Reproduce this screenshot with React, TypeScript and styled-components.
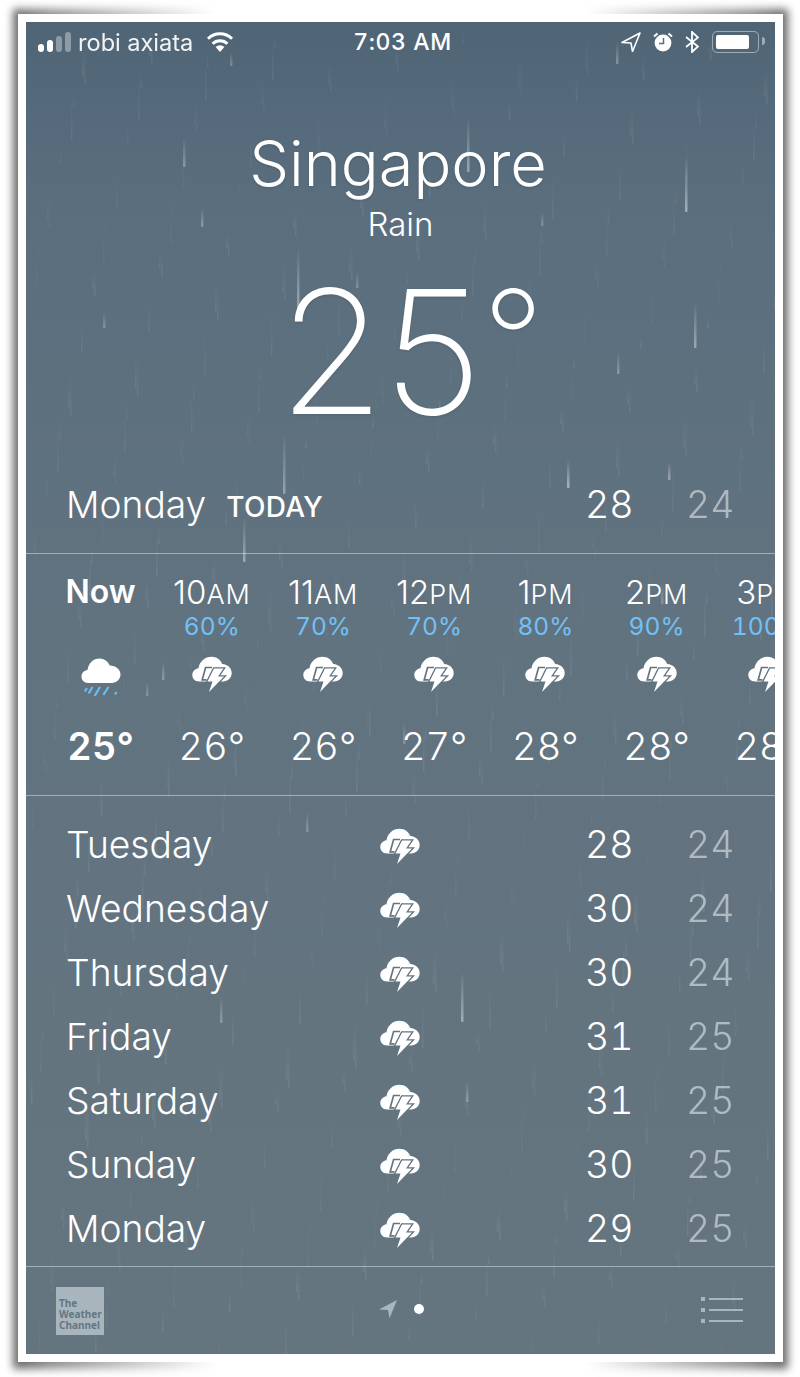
import { createGlobalStyle } from "styled-components";
import styled from "styled-components";

const GlobalStyle = createGlobalStyle`
  html, body {
    margin: 0;
    padding: 0;
    background: #fff;
  }
  body {
    font-family: Inter, "Noto Sans", sans-serif;
    font-variant-numeric: tabular-nums;
    -webkit-font-smoothing: antialiased;
  }
`;

const Page = styled.div`
  width: 800px;
  height: 1377px;
  overflow: hidden;
  padding: 14px 0 0 18px;
  box-sizing: border-box;
  isolation: isolate;
`;

const Frame = styled.div`
  position: relative;
  width: 765px;
  height: 1348px;
  padding: 8px;
  box-sizing: border-box;
  background: #fff;
  &::before {
    content: "";
    position: absolute;
    inset: -5px -5px -7px -5px;
    z-index: -1;
    filter: blur(4px);
    background: linear-gradient(
      90deg,
      #666 0,
      #8f8f8f 5%,
      rgba(255, 255, 255, 0) 26%,
      rgba(255, 255, 255, 0) 74%,
      #8f8f8f 95%,
      #666 100%
    );
  }
`;

const Screen = styled.div`
  position: relative;
  width: 749px;
  height: 1332px;
  overflow: hidden;
  color: #fff;
  background: linear-gradient(180deg, #4f6576 0, #5a6e7e 180px, #61737f 600px, #65757f 100%);
  display: flex;
  flex-direction: column;
`;

const Rain = styled.svg`
  position: absolute;
  inset: 0;
  pointer-events: none;
`;

const StatusBar = styled.div`
  height: 40px;
  display: grid;
  grid-template-columns: 1fr auto 1fr;
  align-items: center;
  padding: 0 11px 0 12px;
  position: relative;
`;

const StatusLeft = styled.div`
  display: flex;
  align-items: center;
`;

const Signal = styled.div`
  display: flex;
  align-items: flex-end;
  gap: 3px;
  height: 20px;
  margin-right: 7px;
`;

const SignalBar = styled.span<{ $h: number; $on?: boolean }>`
  width: 6px;
  height: ${({ $h }) => $h}px;
  border-radius: 3px;
  background: ${({ $on }) => ($on ? "#fff" : "rgba(255,255,255,0.35)")};
`;

const Carrier = styled.span`
  font-weight: 400;
  font-size: 23.6px;
  opacity: 0.92;
  margin-right: 13px;
`;

const Clock = styled.span`
  font-weight: 500;
  font-size: 23px;
  letter-spacing: 0.6px;
  margin-left: 3px;
`;

const StatusRight = styled.div`
  display: flex;
  align-items: center;
  justify-content: flex-end;
  gap: 12px;
`;

const Battery = styled.div`
  position: relative;
  width: 47px;
  height: 22px;
  box-sizing: border-box;
  margin-left: 1px;
  margin-right: 5px;
  padding: 3px;
  border: 1.5px solid rgba(255, 255, 255, 0.45);
  border-radius: 5px;
  &::after {
    content: "";
    position: absolute;
    right: -7px;
    top: 5px;
    width: 3px;
    height: 8px;
    border-radius: 0 3px 3px 0;
    background: rgba(255, 255, 255, 0.45);
  }
`;

const BatteryFill = styled.div`
  width: 33px;
  height: 100%;
  border-radius: 2px;
  background: #fff;
`;

const Hero = styled.div`
  height: 393px;
  display: flex;
  flex-direction: column;
  align-items: center;
  position: relative;
  box-sizing: border-box;
`;

const City = styled.div`
  margin-top: 57px;
  padding-right: 5px;
  font-size: 63px;
  line-height: 88px;
  font-weight: 350;
  text-shadow: 0 1px 3px rgba(0, 0, 0, 0.12);
`;

const Condition = styled.div`
  font-size: 33px;
  line-height: 38px;
  margin-top: -2px;
  font-weight: 300;
`;

const BigTemp = styled.div`
  font-size: 172px;
  line-height: 190px;
  margin-top: 13px;
  padding-left: 10px;
  font-weight: 200;
  letter-spacing: -9px;
  text-shadow: 0 1px 3px rgba(0, 0, 0, 0.12);
`;

const BigDegree = styled.span`
  font-size: 135px;
  line-height: 0;
  vertical-align: 27px;
  margin-left: 2px;
`;

const TodayRow = styled.div`
  height: 98px;
  display: flex;
  align-items: center;
  padding: 0 42px 0 40px;
  position: relative;
`;

const DayName = styled.span`
  font-size: 37.2px;
  font-weight: 300;
`;

const TodayTag = styled.span`
  margin-left: 20px;
  padding-top: 5px;
  font-size: 28px;
  font-weight: 500;
  letter-spacing: 0.3px;
`;

const Temps = styled.div`
  margin-left: auto;
  display: flex;
  gap: 54px;
`;

const High = styled.span`
  font-size: 37.6px;
  font-weight: 300;
  width: 47px;
  text-align: right;
`;

const Low = styled(High)`
  opacity: 0.5;
`;

const Hourly = styled.div`
  height: 243px;
  box-sizing: border-box;
  border-top: 1px solid rgba(255, 255, 255, 0.42);
  border-bottom: 1px solid rgba(255, 255, 255, 0.42);
  display: flex;
  padding-left: 19px;
  overflow: hidden;
  position: relative;
`;

const HourColumn = styled.div`
  flex: 0 0 111.2px;
  display: flex;
  flex-direction: column;
  align-items: center;
  white-space: nowrap;
`;

const HourLabel = styled.div<{ $bold?: boolean }>`
  margin-top: 20px;
  height: 36px;
  line-height: 36px;
  font-size: ${({ $bold }) => ($bold ? 32 : 33)}px;
  font-variant-numeric: normal;
  font-weight: ${({ $bold }) => ($bold ? 600 : 300)};
`;

const Meridiem = styled.span`
  font-size: 27px;
  font-weight: 300;
  letter-spacing: 0.8px;
`;

const Chance = styled.div`
  height: 28px;
  line-height: 30px;
  margin-top: 1px;
  font-size: 24.5px;
  font-weight: 400;
  color: #72c0f6;
`;

const HourIcon = styled.div`
  height: 46px;
  margin-top: 17px;
  display: flex;
  justify-content: center;
  align-items: flex-start;
`;

const HourTemp = styled.div<{ $bold?: boolean }>`
  margin-top: 24px;
  line-height: 40px;
  font-size: 38px;
  font-weight: ${({ $bold }) => ($bold ? 600 : 300)};
`;

const Daily = styled.div`
  height: 471px;
  box-sizing: border-box;
  padding-top: 16px;
  border-bottom: 1px solid rgba(255, 255, 255, 0.42);
  position: relative;
`;

const DayRow = styled.div`
  height: 64px;
  display: grid;
  grid-template-columns: 312px 44px 1fr;
  align-items: center;
  padding: 0 42px 0 40px;
`;

const DayIcon = styled.div`
  display: flex;
  justify-content: center;
  padding-top: 3px;
`;

const Footer = styled.div`
  flex: 1;
  display: grid;
  grid-template-columns: 1fr auto 1fr;
  align-items: center;
  padding: 0 32px 0 30px;
  position: relative;
`;

const ChannelLogo = styled.div`
  width: 48px;
  height: 48px;
  box-sizing: border-box;
  padding: 11px 0 0 3px;
  background: #a9b5bd;
  color: #647683;
  font-family: "Noto Sans", sans-serif;
  font-size: 10px;
  line-height: 11px;
  font-weight: 700;
`;

const Pager = styled.div`
  display: flex;
  align-items: center;
  gap: 16px;
  margin: 0 0 4px 2px;
`;

const PagerDot = styled.span`
  width: 10px;
  height: 10px;
  border-radius: 50%;
  background: #fff;
`;

const ListButton = styled.div`
  justify-self: end;
  display: grid;
  gap: 7px;
  margin-bottom: 2px;
`;

const ListRow = styled.div`
  display: flex;
  align-items: center;
  gap: 4px;
  height: 4px;
`;

const ListBullet = styled.span`
  width: 4px;
  height: 4px;
  background: #aab6bd;
`;

const ListLine = styled.span`
  width: 34px;
  height: 2px;
  background: #aab6bd;
`;

function StormIcon() {
  return (
    <svg width="40" height="36" viewBox="0 0 40 36">
      <path
        d="M7 25.5C3 25.5 0.3 22.6 0.3 19C0.3 15.4 3 12.6 6.5 12.2C7.5 5.6 13 0.8 19.5 0.8C24.5 0.8 28.5 3.6 30.3 8C35.8 8.4 39.7 12.2 39.7 17C39.7 21.8 36 25.5 31 25.5Z"
        fill="#fff"
      />
      <path d="M20 11.5H13.6L10.2 23.8H14.5" fill="none" stroke="#62747f" strokeWidth="1.7" />
      <path
        d="M22 12.5H31.5L26 20.5H32L17 36L20.5 25.5H15.5Z"
        fill="#fff"
        stroke="#62747f"
        strokeWidth="2.6"
        paintOrder="stroke"
      />
    </svg>
  );
}

function RainIcon() {
  return (
    <svg width="40" height="40" viewBox="0 0 40 40">
      <path
        d="M7 27C3 27 0.5 24 0.5 20.6C0.5 17 3.2 14.3 6.5 14C7.6 7 12.4 2.5 18.4 2.5C23.2 2.5 27 5.4 28.8 9.6C34.8 9.6 39.5 13.6 39.5 18.6C39.5 23.4 35.6 27 30.6 27Z"
        fill="#fff"
      />
      <g stroke="#6dbcf2" strokeWidth="2.2" fill="none">
        <path d="M6 32L3.8 35.5" />
        <path d="M11.4 31L7.6 37.5" />
        <path d="M19 31L13.6 40" />
        <path d="M27.4 31L22.4 39" />
        <path d="M35.6 36L34 38.5" />
      </g>
    </svg>
  );
}

function LocationArrow({ solid }: { solid?: boolean }) {
  return (
    <svg width="20" height="20" viewBox="0 0 20 20">
      <path
        d="M19 1L1 10.5L10 11L11.5 19.5Z"
        fill={solid ? "#a9b5bd" : "none"}
        stroke={solid ? "none" : "#fff"}
        strokeWidth="1.6"
        strokeLinejoin="round"
      />
    </svg>
  );
}

const WifiIcon = () => (
  <svg width="28" height="20" viewBox="0 0 28 20">
    <path d="M14 20L9.6 15A6.4 6.4 0 0 1 18.4 15Z" fill="#fff" />
    <path d="M6.6 11.8A10.6 10.6 0 0 1 21.4 11.8" fill="none" stroke="#fff" strokeWidth="3" />
    <path d="M2 6.8A17 17 0 0 1 26 6.8" fill="none" stroke="#fff" strokeWidth="3" />
  </svg>
);

const AlarmIcon = () => (
  <svg width="20" height="20" viewBox="0 0 20 20">
    <circle cx="10" cy="11" r="8.4" fill="#fff" />
    <path d="M10.5 6V11.5H6" fill="none" stroke="#5a6e7d" strokeWidth="1.5" />
    <path d="M1 4.5L4.5 1.5M19 4.5L15.5 1.5" stroke="#fff" strokeWidth="2" />
  </svg>
);

const BluetoothIcon = () => (
  <svg width="14" height="22" viewBox="0 0 14 22">
    <path d="M1 6L13 15.5L7 21V1L13 6.5L1 16" fill="none" stroke="#fff" strokeWidth="1.8" />
  </svg>
);

const hours = [
  { h: "10", m: "AM", p: "60%", t: "26°" },
  { h: "11", m: "AM", p: "70%", t: "26°" },
  { h: "12", m: "PM", p: "70%", t: "27°" },
  { h: "1", m: "PM", p: "80%", t: "28°" },
  { h: "2", m: "PM", p: "90%", t: "28°" },
  { h: "3", m: "PM", p: "100%", t: "28°" },
];

const days = [
  { d: "Tuesday", hi: 28, lo: 24 },
  { d: "Wednesday", hi: 30, lo: 24 },
  { d: "Thursday", hi: 30, lo: 24 },
  { d: "Friday", hi: 31, lo: 25 },
  { d: "Saturday", hi: 31, lo: 25 },
  { d: "Sunday", hi: 30, lo: 25 },
  { d: "Monday", hi: 29, lo: 25 },
];

// main visible streaks, in screen coords: x, y, length, opacity
const bigDrops = [
  [441, 95, 55, 0.4], [659, 135, 55, 0.45], [157, 115, 30, 0.3], [271, 225, 62, 0.4],
  [668, 280, 46, 0.4], [257, 410, 62, 0.35], [217, 495, 45, 0.4], [541, 438, 28, 0.5],
  [642, 440, 18, 0.4], [435, 950, 50, 0.42], [194, 975, 26, 0.3], [204, 30, 14, 0.25],
  [591, 330, 22, 0.3], [77, 290, 16, 0.25], [440, 1060, 20, 0.28], [175, 185, 20, 0.3],
  [590, 20, 22, 0.3], [377, 700, 22, 0.25], [280, 790, 20, 0.25], [635, 560, 22, 0.25],
  [136, 640, 18, 0.3], [120, 660, 14, 0.25], [330, 250, 16, 0.25], [515, 190, 14, 0.25],
];

// faint background rain, pseudo random but stable
const faintDrops = Array.from({ length: 520 }, (_, i) => {
  const a = (i * 7919) % 749;
  const b = (i * 104729) % 1332;
  return { x: a, y: b, len: 10 + ((i * 31) % 40), o: 0.02 + ((i * 13) % 10) / 250 };
});

export default function App() {
  return (
    <Page>
      <GlobalStyle />
      <Frame>
        <Screen>
          <Rain width="749" height="1332" viewBox="0 0 749 1332">
            <defs>
              <linearGradient id="drop" x1="0" y1="0" x2="0" y2="1">
                <stop offset="0" stopColor="#fff" stopOpacity="0" />
                <stop offset="1" stopColor="#fff" stopOpacity="1" />
              </linearGradient>
            </defs>
            {faintDrops.map((r, i) => (
              <rect key={i} x={r.x} y={r.y} width="1.5" height={r.len} fill="url(#drop)" opacity={r.o * 1.6} />
            ))}
            {bigDrops.map(([x, y, l, o], i) => (
              <rect key={i} x={x} y={y} width="2.5" height={l} rx="1" fill="url(#drop)" opacity={o} />
            ))}
          </Rain>

          <StatusBar>
            <StatusLeft>
              <Signal>
                <SignalBar $h={8} $on />
                <SignalBar $h={12} $on />
                <SignalBar $h={16} />
                <SignalBar $h={20} />
              </Signal>
              <Carrier>robi axiata</Carrier>
              <WifiIcon />
            </StatusLeft>
            <Clock>7:03 AM</Clock>
            <StatusRight>
              <LocationArrow />
              <AlarmIcon />
              <BluetoothIcon />
              <Battery>
                <BatteryFill />
              </Battery>
            </StatusRight>
          </StatusBar>

          <Hero>
            <City>Singapore</City>
            <Condition>Rain</Condition>
            <BigTemp>
              25<BigDegree>°</BigDegree>
            </BigTemp>
          </Hero>

          <TodayRow>
            <DayName>Monday</DayName>
            <TodayTag>TODAY</TodayTag>
            <Temps>
              <High>28</High>
              <Low as="span">24</Low>
            </Temps>
          </TodayRow>

          <Hourly>
            <HourColumn>
              <HourLabel $bold>Now</HourLabel>
              <Chance />
              <HourIcon>
                <RainIcon />
              </HourIcon>
              <HourTemp $bold>25°</HourTemp>
            </HourColumn>
            {hours.map((h) => (
              <HourColumn key={h.h}>
                <HourLabel>
                  {h.h}
                  <Meridiem>{h.m}</Meridiem>
                </HourLabel>
                <Chance>{h.p}</Chance>
                <HourIcon>
                  <StormIcon />
                </HourIcon>
                <HourTemp>{h.t}</HourTemp>
              </HourColumn>
            ))}
          </Hourly>

          <Daily>
            {days.map((d) => (
              <DayRow key={d.d}>
                <DayName>{d.d}</DayName>
                <DayIcon>
                  <StormIcon />
                </DayIcon>
                <Temps>
                  <High>{d.hi}</High>
                  <Low as="span">{d.lo}</Low>
                </Temps>
              </DayRow>
            ))}
          </Daily>

          <Footer>
            <ChannelLogo>
              The
              <br />
              Weather
              <br />
              Channel
            </ChannelLogo>
            <Pager>
              <LocationArrow solid />
              <PagerDot />
            </Pager>
            <ListButton>
              {[0, 1, 2].map((i) => (
                <ListRow key={i}>
                  <ListBullet />
                  <ListLine />
                </ListRow>
              ))}
            </ListButton>
          </Footer>
        </Screen>
      </Frame>
    </Page>
  );
}
